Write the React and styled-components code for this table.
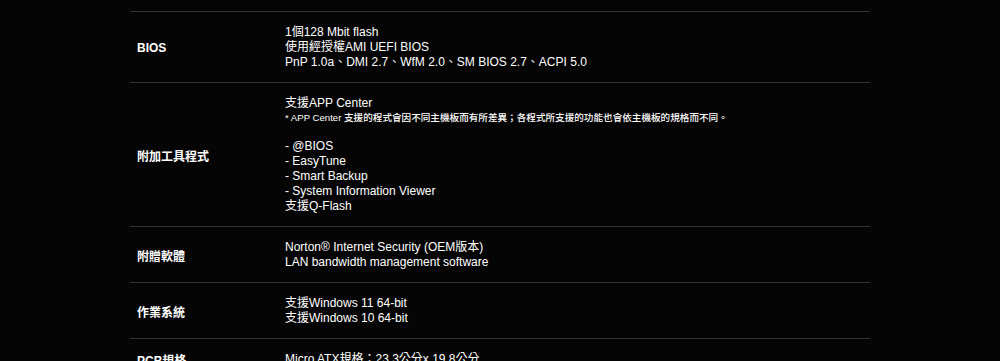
import React from "react";
import styled, { createGlobalStyle } from "styled-components";

const GlobalStyle = createGlobalStyle`
html, body {
  margin: 0;
  padding: 0;
  background: #050505;
}
body {
  font-family: "Liberation Sans", Arial, "Noto Sans CJK TC", sans-serif;
  color: #fff;
}
`

const specs = [
  {
    label: "BIOS",
    lines: [
      "1個128 Mbit flash",
      "使用經授權AMI UEFI BIOS",
      "PnP 1.0a、DMI 2.7、WfM 2.0、SM BIOS 2.7、ACPI 5.0",
    ],
  },
  {
    label: "附加工具程式",
    lines: [
      "支援APP Center",
      { note: "* APP Center 支援的程式會因不同主機板而有所差異；各程式所支援的功能也會依主機板的規格而不同。" },
      "",
      "- @BIOS",
      "- EasyTune",
      "- Smart Backup",
      "- System Information Viewer",
      "支援Q-Flash",
    ],
  },
  {
    label: "附贈軟體",
    lines: [
      "Norton® Internet Security (OEM版本)",
      "LAN bandwidth management software",
    ],
  },
  {
    label: "作業系統",
    lines: ["支援Windows 11 64-bit", "支援Windows 10 64-bit"],
  },
  {
    label: "PCB規格",
    lines: ["Micro ATX規格：23.3公分x 19.8公分"],
  },
];

function App() {
  return (
    <>
      <GlobalStyle />
      <SpecTable>
        {specs.map((row) => (
          <SpecRow key={row.label}>
            <Label>{row.label}</Label>
            <Value>
              {row.lines.map((line, i) =>
                typeof line === "string" ? (
                  <Line key={i}>{line || "\u00a0"}</Line>
                ) : (
                  <Note key={i}>{line.note}</Note>
                )
              )}
            </Value>
          </SpecRow>
        ))}
      </SpecTable>
    </>
  );
}

const SpecTable = styled.div`
width: 740px;
margin: 11px auto 0;
`

const SpecRow = styled.div`
display: grid;
grid-template-columns: 155px 1fr;
border-top: 1px solid #333;
`

const Label = styled.div`
display: flex;
align-items: center;
padding: 1px 0 0 7px;
font-size: 12px;
font-weight: 700;
color: #fff;
`

const Value = styled.div`
padding: 13px 0 12px;
font-size: 12px;
color: #fff;
`

const Line = styled.div`
line-height: 15px;
height: 15px;
white-space: nowrap;
`

const Note = styled.div`
font-size: 9.6px;
font-weight: 500;
line-height: 13px;
height: 13px;
white-space: nowrap;
`

export default App
